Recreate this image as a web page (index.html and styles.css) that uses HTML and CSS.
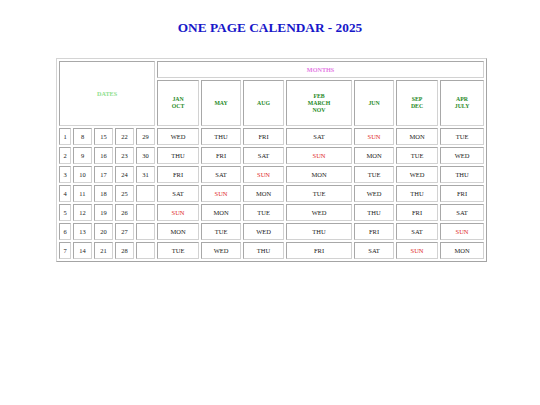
FILE: index.html
```html
<!DOCTYPE html>
<html>
<head>
<meta charset="utf-8">
<title>One Page Calendar 2025</title>
<link rel="stylesheet" href="styles.css">
</head>
<body>
<h1 class="title">ONE PAGE CALENDAR - 2025</h1>
<table class="cal">
  <colgroup>
    <col class="c-n"><col class="c-d"><col class="c-d"><col class="c-d"><col class="c-d">
    <col class="c-jan"><col class="c-may"><col class="c-aug"><col class="c-feb"><col class="c-jun"><col class="c-sep"><col class="c-apr">
  </colgroup>
  <tr class="r-top">
    <td class="dates" colspan="5" rowspan="2">DATES</td>
    <td class="months" colspan="7">MONTHS</td>
  </tr>
  <tr class="r-names">
    <td class="mh">JAN<br>OCT</td>
    <td class="mh">MAY</td>
    <td class="mh">AUG</td>
    <td class="mh">FEB<br>MARCH<br>NOV</td>
    <td class="mh">JUN</td>
    <td class="mh">SEP<br>DEC</td>
    <td class="mh">APR<br>JULY</td>
  </tr>
  <tr class="r-day">
    <td>1</td><td>8</td><td>15</td><td>22</td><td>29</td>
    <td>WED</td><td>THU</td><td>FRI</td><td>SAT</td><td class="sun">SUN</td><td>MON</td><td>TUE</td>
  </tr>
  <tr class="r-day">
    <td>2</td><td>9</td><td>16</td><td>23</td><td>30</td>
    <td>THU</td><td>FRI</td><td>SAT</td><td class="sun">SUN</td><td>MON</td><td>TUE</td><td>WED</td>
  </tr>
  <tr class="r-day">
    <td>3</td><td>10</td><td>17</td><td>24</td><td>31</td>
    <td>FRI</td><td>SAT</td><td class="sun">SUN</td><td>MON</td><td>TUE</td><td>WED</td><td>THU</td>
  </tr>
  <tr class="r-day">
    <td>4</td><td>11</td><td>18</td><td>25</td><td></td>
    <td>SAT</td><td class="sun">SUN</td><td>MON</td><td>TUE</td><td>WED</td><td>THU</td><td>FRI</td>
  </tr>
  <tr class="r-day">
    <td>5</td><td>12</td><td>19</td><td>26</td><td></td>
    <td class="sun">SUN</td><td>MON</td><td>TUE</td><td>WED</td><td>THU</td><td>FRI</td><td>SAT</td>
  </tr>
  <tr class="r-day">
    <td>6</td><td>13</td><td>20</td><td>27</td><td></td>
    <td>MON</td><td>TUE</td><td>WED</td><td>THU</td><td>FRI</td><td>SAT</td><td class="sun">SUN</td>
  </tr>
  <tr class="r-day">
    <td>7</td><td>14</td><td>21</td><td>28</td><td></td>
    <td>TUE</td><td>WED</td><td>THU</td><td>FRI</td><td>SAT</td><td class="sun">SUN</td><td>MON</td>
  </tr>
</table>
</body>
</html>
```
FILE: styles.css
```css
body {
  margin: 0;
  background: #ffffff;
  font-family: "Liberation Serif", "Times New Roman", serif;
  color: #222222;
}

.title {
  margin: 20px 0 0;
  text-align: center;
  font-size: 13.3px;
  line-height: 15px;
  font-weight: bold;
  color: #1717c9;
}

.cal {
  margin: 23px 0 0 56px;
  width: 431px;
  table-layout: fixed;
  border-collapse: separate;
  border-spacing: 2px;
  border: 1px solid;
  border-color: #d4d4d4 #a4a4a4 #a4a4a4 #d4d4d4;
}

.cal td {
  border: 1px solid;
  border-color: #a8a8a8 #d2d2d2 #d2d2d2 #a8a8a8;
  padding: 0;
  text-align: center;
  vertical-align: middle;
  font-size: 6.5px;
  line-height: 8px;
}

.c-n { width: 12px; }
.c-d { width: 19px; }
.c-jan { width: 42px; }
.c-may { width: 40px; }
.c-aug { width: 41px; }
.c-feb { width: 66px; }
.c-jun { width: 40px; }
.c-sep { width: 42px; }
.c-apr { width: 44px; }

.r-top { height: 17px; }
.r-names { height: 46px; }
.r-day { height: 17px; }

.cal td.dates {
  color: #8ee08e;
  font-weight: bold;
  font-size: 6.2px;
}

.cal td.months {
  color: #e47ae4;
  font-weight: bold;
  font-size: 6.2px;
}

.cal td.mh {
  color: #1f8a1f;
  font-weight: bold;
  font-size: 5.8px;
  line-height: 7px;
}

.cal td.sun {
  color: #e02828;
}
```
